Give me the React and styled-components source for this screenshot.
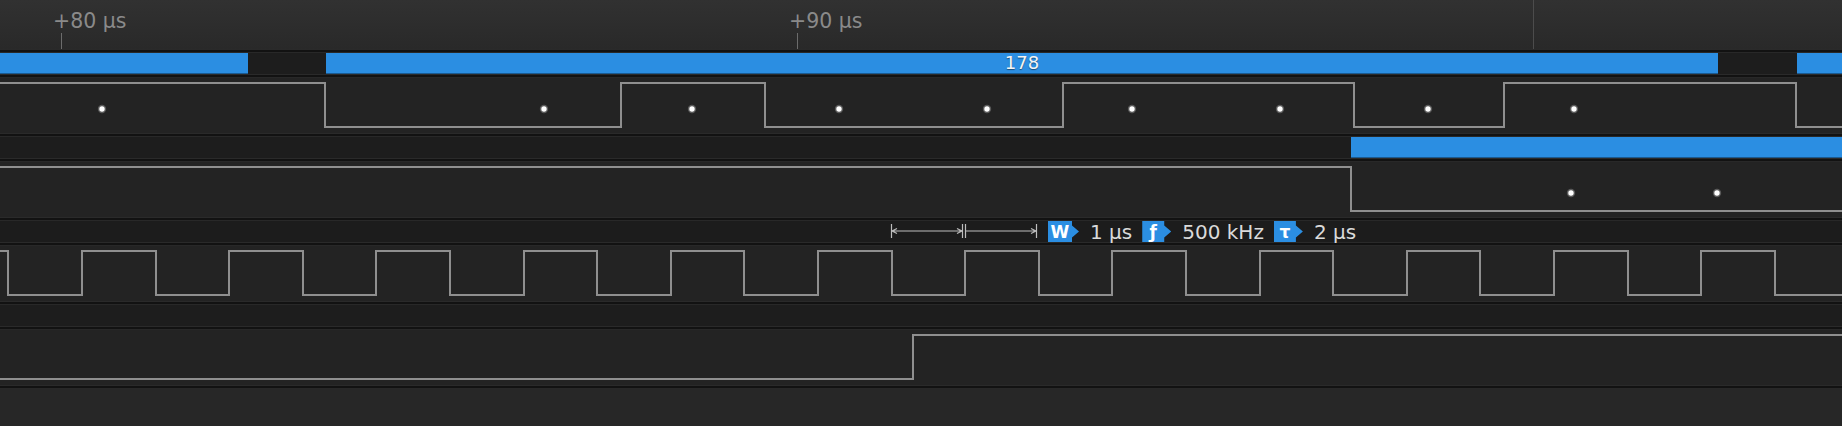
import React from 'react';
import styled, { createGlobalStyle } from 'styled-components';

const WIDTH = 1842;
const PX_PER_US = 73.6;
const at = us => 61 + (us - 80) * PX_PER_US;

// clock: first falling edge at 8.45px, one edge every half period
const clockEdges = [];
for (let x = 8.45; x < WIDTH; x += PX_PER_US) clockEdges.push(Math.round(x));

const channels = [
  {
    segments: [
      { from: 0, to: 248 },
      { from: 326, to: 1718, label: '178' },
      { from: 1797, to: WIDTH },
    ],
    high: true,
    edges: [325, 621, 765, 1063, 1354, 1504, 1796],
    dots: [102, 544, 692, 839, 987, 1132, 1280, 1428, 1574],
  },
  {
    segments: [{ from: 1351, to: WIDTH }],
    high: true,
    edges: [1351],
    dots: [1571, 1717],
  },
  {
    measure: true,
    high: true,
    edges: clockEdges,
  },
  {
    high: false,
    edges: [913],
  },
];

const GlobalStyle = createGlobalStyle`
  html, body {
    margin: 0;
    padding: 0;
    background: #272727;
  }
  body {
    font-family: "DejaVu Sans", "Liberation Sans", sans-serif;
  }
`;

function Waveform({ high, edges, dots = [] }) {
  const yHi = 5;
  const yLo = 49;
  let level = high;
  let d = `M0 ${level ? yHi : yLo}`;
  edges.forEach(x => {
    d += ` H${x}`;
    level = !level;
    d += ` V${level ? yHi : yLo}`;
  });
  d += ` H${WIDTH}`;
  return (
    <Trace width={WIDTH} height={55} viewBox={`0 0 ${WIDTH} 55`}>
      <path d={d} fill="none" stroke="#8f8f8f" strokeWidth="2" />
      {dots.map(x => (
        <g key={x}>
          <circle cx={x} cy={31} r={4.2} fill="rgba(255,255,255,0.25)" />
          <circle cx={x} cy={31} r={2.7} fill="#ffffff" />
        </g>
      ))}
    </Trace>
  );
}

function Span() {
  return (
    <svg width="148" height="21" viewBox="0 0 148 21">
      <g stroke="#bdbdbd" strokeWidth="1.2" fill="none">
        <path d="M1.5 3 V17 M2 10 H72 M2 10 L7 7.5 M2 10 L7 12.5 M72 10 L67 7.5 M72 10 L67 12.5 M72.5 3 V17" />
        <path d="M75.5 3 V17 M76 10 H146 M146 10 L141 7.5 M146 10 L141 12.5 M146.5 3 V17" />
      </g>
    </svg>
  );
}

function Measurement() {
  return (
    <Readout style={{ left: 890 }}>
      <Span />
      <Reading>
        <Badge $w={31}>W</Badge>
        <Value>1 µs</Value>
      </Reading>
      <Reading>
        <Badge $w={29}>ƒ</Badge>
        <Value>500 kHz</Value>
      </Reading>
      <Reading>
        <Badge $w={29}>τ</Badge>
        <Value>2 µs</Value>
      </Reading>
    </Readout>
  );
}

export default function App() {
  return (
    <Page>
      <GlobalStyle />
      <Ruler>
        {[80, 90].map(us => (
          <Mark key={us} style={{ left: Math.round(at(us)) - 8 }}>
            <TickLabel>+{us} µs</TickLabel>
            <Tick />
          </Mark>
        ))}
        <Cursor style={{ left: 1533 }} />
      </Ruler>
      <Separator />
      {channels.map((ch, i) => (
        <React.Fragment key={i}>
          <BarRow $measure={ch.measure}>
            {ch.segments &&
              ch.segments.map(s => (
                <Segment key={s.from} style={{ left: s.from, width: s.to - s.from }}>
                  {s.label}
                </Segment>
              ))}
            {ch.measure && <Measurement />}
          </BarRow>
          <Separator />
          <SignalRow>
            <Waveform high={ch.high} edges={ch.edges} dots={ch.dots} />
          </SignalRow>
          <Separator />
        </React.Fragment>
      ))}
      <Filler />
    </Page>
  );
}

const Page = styled.div`
  width: ${WIDTH}px;
  height: 426px;
  display: flex;
  flex-direction: column;
  overflow: hidden;
  background: #272727;
`;

const Ruler = styled.div`
  position: relative;
  height: 49px;
  flex: none;
  background: linear-gradient(#313131, #292929);
`;

const Mark = styled.div`
  position: absolute;
  top: 0;
  bottom: 0;
  display: flex;
  flex-direction: column;
  justify-content: flex-end;
`;

const TickLabel = styled.span`
  font-size: 20.5px;
  line-height: 24px;
  color: #8a8a8a;
  white-space: nowrap;
`;

const Tick = styled.div`
  width: 1px;
  height: 16px;
  margin-left: 8px;
  background: #6c6c6c;
`;

const Cursor = styled.div`
  position: absolute;
  top: 0;
  bottom: 0;
  width: 1px;
  background: #4c4c4c;
`;

const Separator = styled.div`
  height: 4px;
  flex: none;
  background: linear-gradient(#2a2a2a 0 1px, #121212 1px 3px, #282828 3px);
`;

const BarRow = styled.div`
  position: relative;
  height: 21px;
  flex: none;
  background: ${p => (p.$measure ? '#1c1c1c' : '#1d1d1d')};
`;

const Segment = styled.div`
  position: absolute;
  top: 0;
  bottom: 0;
  box-sizing: border-box;
  display: flex;
  align-items: center;
  justify-content: center;
  background: #2b8ee2;
  border-bottom: 1px solid #1b5a90;
  color: #f4f4f4;
  font-size: 18px;
  line-height: 1;
  text-shadow: 0 1px 1px rgba(0, 0, 0, 0.45);
`;

const SignalRow = styled.div`
  height: 55px;
  flex: none;
  background: #232323;
`;

const Trace = styled.svg`
  display: block;
`;

const Readout = styled.div`
  position: absolute;
  top: 0;
  bottom: 0;
  display: flex;
  align-items: center;
  gap: 10px;
`;

const Reading = styled.div`
  display: flex;
  align-items: center;
  gap: 11px;
  height: 100%;
`;

const Badge = styled.span`
  box-sizing: border-box;
  width: ${p => p.$w}px;
  height: 100%;
  padding-right: 7px;
  display: flex;
  align-items: center;
  justify-content: center;
  background: #2b8ee2;
  color: #ffffff;
  font-size: 17px;
  font-weight: bold;
  clip-path: polygon(
    0 0,
    calc(100% - 7px) 0,
    calc(100% - 7px) 22%,
    100% 50%,
    calc(100% - 7px) 78%,
    calc(100% - 7px) 100%,
    0 100%
  );
`;

const Value = styled.span`
  font-size: 20px;
  line-height: 1;
  color: #dadada;
  white-space: nowrap;
`;

const Filler = styled.div`
  flex: 1;
  background: #272727;
`;
